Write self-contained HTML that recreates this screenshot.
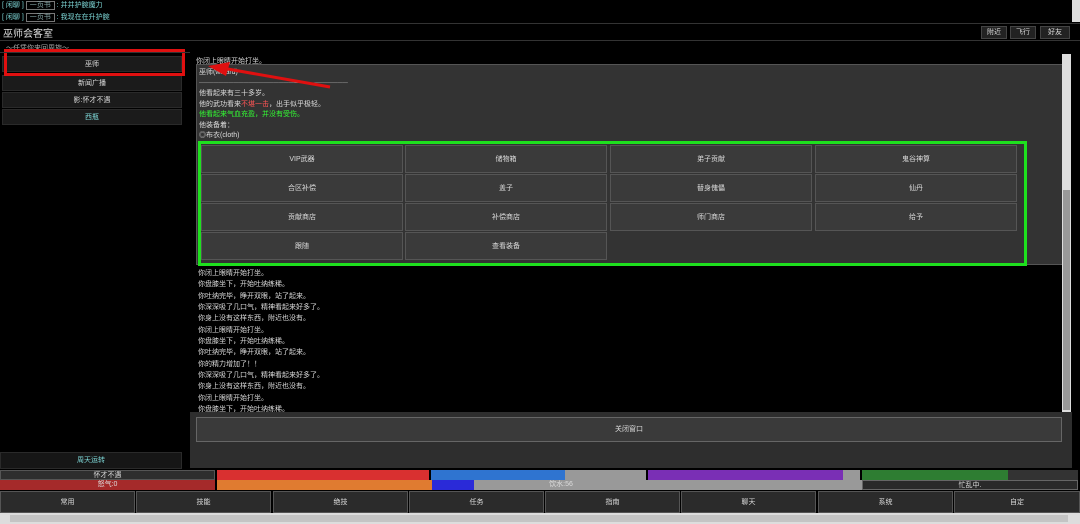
<!DOCTYPE html><html><head><meta charset="utf-8"><style>
*{margin:0;padding:0;box-sizing:border-box}
body{width:1080px;height:524px;background:#000;overflow:hidden;position:relative;font-family:"Liberation Sans","Noto Sans CJK SC",sans-serif;font-size:7px;color:#ddd}
.a{position:absolute}
.btn{position:absolute;background:#333;border:1px solid #444;color:#ddd;text-align:center;font-size:7px}
.lb{position:absolute;left:2px;width:180px;height:16px;line-height:16px;background:#1b1b1b;border:1px solid #2a2a2a;text-align:center;font-size:7px;color:#ddd}
.g{position:absolute;width:202px;height:28px;line-height:28px;background:#3a3a3a;border:1px solid #555;text-align:center;color:#ddd;font-size:7px}
.log div{height:10.5px;line-height:10.5px}
.log2 div{height:11.33px;line-height:11.33px}
.bar{position:absolute;height:10px;line-height:10px;text-align:center;font-size:7px;color:#ddd}
.nav{position:absolute;top:491px;height:22px;line-height:22px;width:135px;background:#2b2b2b;border:1px solid #555;text-align:center;font-size:7px;color:#ddd}
</style></head><body>
<div class="a" style="left:2px;top:0;color:#7ed8d8;line-height:11px">[ 闲聊 ] <span style="border:1px solid #777;padding:0 3px;color:#8aa">一页书</span> : 并并护腕魔力</div>
<div class="a" style="left:2px;top:12px;color:#7ed8d8;line-height:11px">[ 闲聊 ] <span style="border:1px solid #777;padding:0 3px;color:#8aa">一页书</span> : 我现在在升护腕</div>
<div class="a" style="left:1072px;top:0;width:8px;height:22px;background:#ddd"></div>
<div class="a" style="left:0;top:23px;width:1080px;height:1px;background:#333"></div>
<div class="a" style="left:3px;top:25px;font-size:10px;color:#ddd">巫师会客室</div>
<div class="btn" style="left:981px;top:26px;width:26px;height:13px;line-height:11px;background:#222">附近</div>
<div class="btn" style="left:1010px;top:26px;width:26px;height:13px;line-height:11px;background:#222">飞行</div>
<div class="btn" style="left:1040px;top:26px;width:30px;height:13px;line-height:11px;background:#222">好友</div>
<div class="a" style="left:0;top:40px;width:1080px;height:1px;background:#333"></div>
<div class="a" style="left:6px;top:43px;color:#aaa">～任凭你来回周旋～</div>
<div class="lb" style="top:56px">巫师</div>
<div class="lb" style="top:75px">新闻广播</div>
<div class="lb" style="top:92px">影:怀才不遇</div>
<div class="lb" style="top:109px;color:#7ed8d8">西瓶</div>
<div class="a" style="left:4px;top:49px;width:181px;height:27px;border:3px solid #e01010"></div>
<div class="a" style="left:0;top:52px;width:190px;height:1px;background:#333"></div>
<div class="a" style="left:196px;top:56px">你闭上眼睛开始打坐。</div>
<div class="a" style="left:196px;top:64px;width:875px;height:201px;background:#333;border:1px solid #555"></div>
<div class="a log" style="left:199px;top:68px;color:#ddd">
<div>巫师(wizard)</div><div style="color:#999">──────────────────────────────</div>
<div>他看起来有三十多岁。</div><div>他的武功看来<span style="color:#f55">不堪一击</span>，出手似乎极轻。</div><div style="color:#3f3">他看起来气血充盈，并没有受伤。</div><div>他装备着：</div><div>◎布衣(cloth)</div></div>
<svg class="a" style="left:200px;top:62px" width="135" height="28"><line x1="130" y1="25" x2="22" y2="6" stroke="#e01010" stroke-width="3"/><polygon points="8,4 30,0 26,14" fill="#e01010"/></svg>
<div class="g" style="left:201px;top:145px">VIP武器</div><div class="g" style="left:405px;top:145px">储物箱</div><div class="g" style="left:610px;top:145px">弟子贡献</div><div class="g" style="left:815px;top:145px">鬼谷神算</div>
<div class="g" style="left:201px;top:174px">合区补偿</div><div class="g" style="left:405px;top:174px">盖子</div><div class="g" style="left:610px;top:174px">替身傀儡</div><div class="g" style="left:815px;top:174px">仙丹</div>
<div class="g" style="left:201px;top:203px">贡献商店</div><div class="g" style="left:405px;top:203px">补偿商店</div><div class="g" style="left:610px;top:203px">师门商店</div><div class="g" style="left:815px;top:203px">给予</div>
<div class="g" style="left:201px;top:232px">跟随</div><div class="g" style="left:405px;top:232px">查看装备</div>
<div class="a" style="left:198px;top:141px;width:829px;height:125px;border:3px solid #1ee01e"></div>
<div class="a log2" style="left:198px;top:268px">
<div>你闭上眼睛开始打坐。</div><div>你盘膝坐下，开始吐纳练稀。</div><div>你吐纳完毕，睁开双眼，站了起来。</div><div>你深深吸了几口气，精神看起来好多了。</div><div>你身上没有这样东西，附近也没有。</div><div>你闭上眼睛开始打坐。</div><div>你盘膝坐下，开始吐纳练稀。</div><div>你吐纳完毕，睁开双眼，站了起来。</div><div>你的精力增加了！！</div><div>你深深吸了几口气，精神看起来好多了。</div><div>你身上没有这样东西，附近也没有。</div><div>你闭上眼睛开始打坐。</div><div>你盘膝坐下，开始吐纳练稀。</div></div>
<div class="a" style="left:1062px;top:54px;width:9px;height:361px;background:#ddd"></div>
<div class="a" style="left:1063px;top:190px;width:7px;height:220px;background:#999"></div>
<div class="a" style="left:190px;top:412px;width:882px;height:56px;background:#2e2e2e"></div>
<div class="btn" style="left:196px;top:417px;width:866px;height:25px;line-height:23px;background:#3a3a3a;border-color:#666">关闭窗口</div>
<div class="lb" style="left:0;top:452px;width:182px;height:17px;color:#7ed8d8;background:#161616">周天运转</div>
<div class="bar" style="left:0;top:470px;width:215px;background:#2e2e2e;border:1px solid #555">怀才不遇</div>
<div class="bar" style="left:217px;top:470px;width:212px;background:#d93030"></div>
<div class="bar" style="left:431px;top:470px;width:134px;background:#2f74d0"></div>
<div class="bar" style="left:565px;top:470px;width:81px;background:#999"></div>
<div class="bar" style="left:648px;top:470px;width:195px;background:#7a2fb5"></div>
<div class="bar" style="left:843px;top:470px;width:17px;background:#999"></div>
<div class="bar" style="left:862px;top:470px;width:146px;background:#2e7d32"></div>
<div class="bar" style="left:1008px;top:470px;width:70px;background:#333"></div>
<div class="bar" style="left:0;top:480px;width:215px;background:#a52a2a">怒气:0</div>
<div class="bar" style="left:217px;top:480px;width:215px;background:#e07b30"></div>
<div class="bar" style="left:432px;top:480px;width:42px;background:#2a2ad8"></div>
<div class="bar" style="left:474px;top:480px;width:174px;background:#999">饮水:56</div>
<div class="bar" style="left:648px;top:480px;width:214px;background:#999"></div>
<div class="bar" style="left:862px;top:480px;width:216px;background:#2a2a2a;border:1px solid #666">忙乱中.</div>
<div class="nav" style="left:0">常用</div><div class="nav" style="left:136px">技能</div><div class="nav" style="left:273px">绝技</div><div class="nav" style="left:409px">任务</div><div class="nav" style="left:545px">指南</div><div class="nav" style="left:681px">聊天</div><div class="nav" style="left:818px">系统</div><div class="nav" style="left:954px;width:126px">自定</div>
<div class="a" style="left:0;top:513px;width:1080px;height:11px;background:#ddd"></div>
<div class="a" style="left:10px;top:515px;width:1058px;height:7px;background:#c4c4c4"></div>
</body></html>
